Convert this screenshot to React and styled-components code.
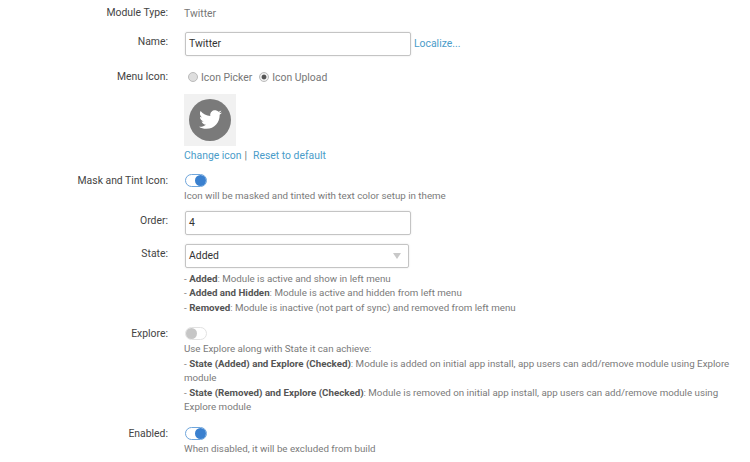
import styled, { createGlobalStyle } from "styled-components";
import { FaTwitter } from "react-icons/fa";

const GlobalStyle = createGlobalStyle`
    html, body {
        margin: 0;
        background-color: #FFFFFF;
        overflow: hidden;
    }
`;

const Form = styled.form`
    display: flex;
    flex-direction: column;
    width: 750px;
    height: 462px;
    overflow: hidden;
    padding-top: 6px;
    box-sizing: border-box;
    font-family: Roboto, "Liberation Sans", sans-serif;
    font-size: 10.4px;
    line-height: 14.4px;
    color: #777777;
`;

const Row = styled.div`
    display: flex;
    align-items: flex-start;
    margin-top: ${(p) => p.$before || 0}px;
    margin-bottom: ${(p) => p.$gap || 0}px;
`;

const Label = styled.label`
    flex: 0 0 168px;
    text-align: right;
    color: #444444;
    padding-top: ${(p) => p.$top || 0}px;
`;

const Field = styled.div`
    margin-left: 16px;
    flex: 1;
    min-width: 0;
    padding-right: 15px;
`;

const Inline = styled.div`
    display: flex;
    align-items: center;
`;

const RadioGroup = styled(Inline)`
    padding-top: 1px;
`;

const StaticValue = styled.div`
    padding-top: 1px;
`;

const TextBox = styled.div`
    display: flex;
    align-items: center;
    box-sizing: border-box;
    width: ${(p) => p.$width}px;
    height: 24px;
    margin-left: 1px;
    padding: 0 3px;
    border: 1px solid #C4C4C4;
    border-radius: 2px;
    box-shadow: 0 0 2px rgba(0, 0, 0, 0.12);
    color: #333333;
`;

const Caret = styled.span`
    margin-left: auto;
    margin-right: 4px;
    width: 0;
    height: 0;
    border-left: 4px solid transparent;
    border-right: 4px solid transparent;
    border-top: 6px solid #C8C8C8;
`;

const Link = styled.a`
    color: #4A9CC9;
    text-decoration: none;
`;

const LocalizeLink = styled(Link)`
    margin-left: 3px;
`;

const RadioOption = styled.span`
    display: inline-flex;
    align-items: center;
    margin-right: 3px;
`;

const RadioDot = styled.span`
    box-sizing: border-box;
    display: inline-block;
    width: 10px;
    height: 10px;
    margin: 0 3px 3px 4px;
    border-radius: 50%;
    border: 1px solid #BBBBBB;
    background: ${(p) => (p.$checked ? "radial-gradient(circle, #555555 0 2px, #EEEEEE 2.8px)" : "#DEDEDE")};
`;

const IconPreview = styled.div`
    display: flex;
    align-items: center;
    justify-content: center;
    width: 52px;
    height: 52px;
    margin-top: 8px;
    background-color: #F1F1F1;
`;

const IconCircle = styled.div`
    display: flex;
    align-items: center;
    justify-content: center;
    width: 42px;
    height: 42px;
    border-radius: 50%;
    background-color: #7A7A7A;
    color: #FFFFFF;
    font-size: 23px;
`;

const LinkRow = styled.div`
    margin-top: 3px;
`;

const Sep = styled.span`
    margin: 0 6px 0 3px;
`;

const Track = styled.span`
    position: relative;
    display: block;
    box-sizing: border-box;
    width: 22px;
    height: 13px;
    margin: 0 0 2px 1px;
    border-radius: 7px;
    border: 1px solid ${(p) => (p.$on ? "#6FA6DC" : "#E2E2E2")};
    background-color: #FFFFFF;
`;

const Knob = styled.span`
    position: absolute;
    top: 0;
    ${(p) => (p.$on ? "right: 0;" : "left: 0;")}
    width: 11px;
    height: 11px;
    border-radius: 50%;
    background-color: ${(p) => (p.$on ? "#3A80CF" : "#C6C6C6")};
`;

const Help = styled.div`
    margin-top: ${(p) => p.$top || 0}px;
    font-size: 9.76px;
    line-height: 14.5px;
    color: #7A7A7A;
`;

const B = styled.b`
    font-weight: 700;
    color: #555555;
`;

function Toggle({ on }) {
    return (
        <Track $on={on}>
            <Knob $on={on} />
        </Track>
    );
}

export default function App() {
    return (
        <>
            <GlobalStyle />
            <Form>
                <Row $gap={11}>
                    <Label>Module Type:</Label>
                    <Field><StaticValue>Twitter</StaticValue></Field>
                </Row>
                <Row $gap={14}>
                    <Label $top={3}>Name:</Label>
                    <Field>
                        <Inline>
                            <TextBox $width={226}>Twitter</TextBox>
                            <LocalizeLink href="#">Localize...</LocalizeLink>
                        </Inline>
                    </Field>
                </Row>
                <Row>
                    <Label>Menu Icon:</Label>
                    <Field>
                        <RadioGroup>
                            <RadioOption><RadioDot />Icon Picker</RadioOption>
                            <RadioOption><RadioDot $checked />Icon Upload</RadioOption>
                        </RadioGroup>
                        <IconPreview>
                            <IconCircle><FaTwitter /></IconCircle>
                        </IconPreview>
                        <LinkRow>
                            <Link href="#">Change icon</Link>
                            <Sep>|</Sep>
                            <Link href="#">Reset to default</Link>
                        </LinkRow>
                    </Field>
                </Row>
                <Row $before={11} $gap={7}>
                    <Label>Mask and Tint Icon:</Label>
                    <Field>
                        <Toggle on />
                        <Help>Icon will be masked and tinted with text color setup in theme</Help>
                    </Field>
                </Row>
                <Row $gap={9}>
                    <Label $top={3}>Order:</Label>
                    <Field><TextBox $width={226}>4</TextBox></Field>
                </Row>
                <Row $gap={12}>
                    <Label $top={3}>State:</Label>
                    <Field>
                        <TextBox $width={224}>Added<Caret /></TextBox>
                        <Help $top={4}>
                            <div>- <B>Added</B>: Module is active and show in left menu</div>
                            <div>- <B>Added and Hidden</B>: Module is active and hidden from left menu</div>
                            <div>- <B>Removed</B>: Module is inactive (not part of sync) and removed from left menu</div>
                        </Help>
                    </Field>
                </Row>
                <Row $gap={12}>
                    <Label>Explore:</Label>
                    <Field>
                        <Toggle />
                        <Help>
                            <div>Use Explore along with State it can achieve:</div>
                            <div>- <B>State (Added) and Explore (Checked)</B>: Module is added on initial app install, app users can add/remove module using Explore module</div>
                            <div>- <B>State (Removed) and Explore (Checked)</B>: Module is removed on initial app install, app users can add/remove module using Explore module</div>
                        </Help>
                    </Field>
                </Row>
                <Row>
                    <Label>Enabled:</Label>
                    <Field>
                        <Toggle on />
                        <Help>When disabled, it will be excluded from build</Help>
                    </Field>
                </Row>
            </Form>
        </>
    );
}
